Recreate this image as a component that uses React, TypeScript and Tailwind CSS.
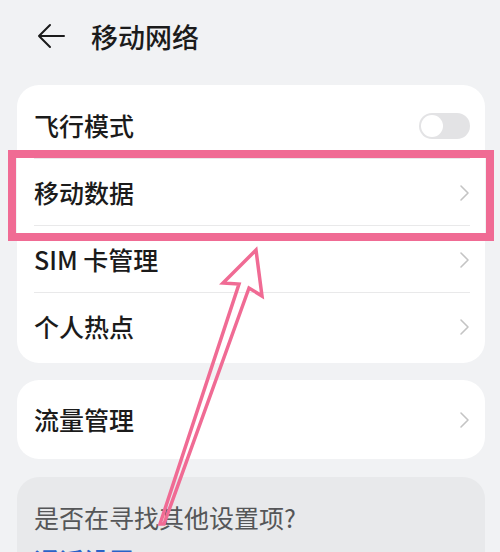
import { ReactNode } from 'react';

const font = { fontFamily: '"Noto Sans CJK SC", "Noto Sans", sans-serif' };

function Chevron() {
  return (
    <svg width="11" height="18" viewBox="0 0 11 18" className="shrink-0">
      <polyline points="2,2 9,9 2,16" fill="none" stroke="#c4c4c4" strokeWidth="1.6" strokeLinecap="round" strokeLinejoin="round" />
    </svg>
  );
}

function Toggle() {
  return (
    <div className="w-[51px] h-[26px] rounded-full bg-[#e3e3e5] p-[2px] flex items-center">
      <div className="w-[22px] h-[22px] rounded-full bg-white" />
    </div>
  );
}

function Row({ label, right, divider }: { label: string; right: ReactNode; divider?: boolean }) {
  return (
    <div className="relative h-[67px] pl-[17px] pr-[15px] flex items-center justify-between">
      <span className="text-[25px] font-medium text-[#1b1b1b] leading-none">{label}</span>
      {right}
      {divider && <div className="absolute left-[17px] right-[15px] bottom-0 h-px bg-[#e9e9ea]" />}
    </div>
  );
}

export default function App() {
  return (
    <div className="relative w-[500px] h-[552px] overflow-hidden bg-[#f1f2f4]" style={font}>
      {/* 헤더 */}
      <div className="h-[72px] flex items-center pl-[37px]">
        <svg width="28" height="26" viewBox="0 0 28 26">
          <path d="M27 13H2M13 2L2 13l11 11" fill="none" stroke="#1b1b1b" strokeWidth="2" strokeLinecap="round" strokeLinejoin="round" />
        </svg>
        <span className="ml-[26px] text-[27px] font-medium text-[#1b1b1b] leading-none">移动网络</span>
      </div>

      {/* 첫 번째 카드 */}
      <div className="mt-[13px] mx-[17px] w-[468px] bg-white rounded-[22px] pt-[7px] pb-[3px]">
        <Row label="飞行模式" right={<Toggle />} divider />
        <Row label="移动数据" right={<Chevron />} divider />
        <Row label="SIM 卡管理" right={<Chevron />} divider />
        <Row label="个人热点" right={<Chevron />} />
      </div>

      {/* 流量管理 */}
      <div className="mt-[17px] mx-[17px] w-[468px] h-[79px] bg-white rounded-[22px] pl-[17px] pr-[15px] flex items-center justify-between">
        <span className="text-[25px] font-medium text-[#1b1b1b] leading-none">流量管理</span>
        <Chevron />
      </div>

      {/* 다른 설정 */}
      <div className="mt-[18px] mx-[17px] w-[468px] h-[140px] bg-[#e8e9eb] rounded-[22px] px-[17px] pt-[28px]">
        <div className="text-[25px] text-[#555658] leading-none">是否在寻找其他设置项?</div>
        <div className="mt-[18px] text-[25px] font-medium text-[#2a62c8] leading-none">通话设置</div>
      </div>

      {/* 강조 표시 */}
      <div className="absolute left-[8px] top-[150px] w-[486px] h-[91px] border-[8px] border-[#f06b94] pointer-events-none" />
      <svg className="absolute left-0 top-0 pointer-events-none" width="500" height="552" viewBox="0 0 500 552">
        <polygon
          points="160,524 239,284 223,283 256,250 262,296 249,288 164,524"
          fill="none"
          stroke="#f06b94"
          strokeWidth="3.5"
          strokeLinejoin="miter"
        />
      </svg>
    </div>
  );
}
